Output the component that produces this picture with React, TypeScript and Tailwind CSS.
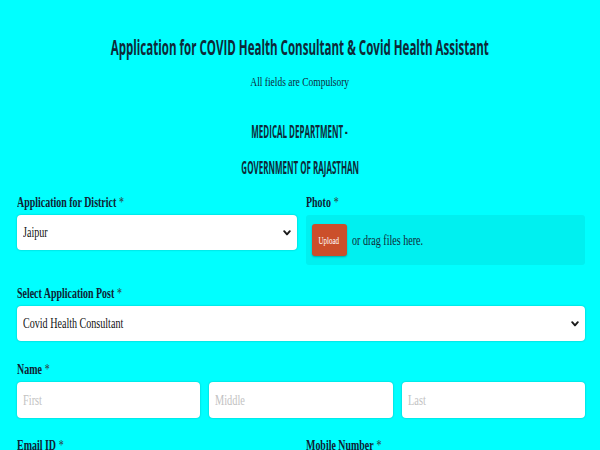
import React from "react";

const serif = "font-['Liberation_Serif',serif]";

function Label({ children, star = true }: { children: React.ReactNode; star?: boolean }) {
  return (
    <div className={`h-[18px] leading-[18px] text-[14px] font-bold text-[#0f2233] ${serif}`}>
      <span className="inline-block origin-left scale-x-[0.71] whitespace-nowrap">
        {children}
        {star && <span className="font-normal text-[#333] ml-[4px]">*</span>}
      </span>
    </div>
  );
}

function Chevron() {
  return (
    <svg width="8" height="6" viewBox="0 0 8 6" className="shrink-0">
      <polyline points="1.2,1.2 4,4.4 6.8,1.2" fill="none" stroke="#1a1a1a" strokeWidth="1.9" strokeLinecap="round" strokeLinejoin="round" />
    </svg>
  );
}

function Select({ value }: { value: string }) {
  return (
    <div className="h-[35px] bg-white rounded-[4px] shadow-[0_0_2px_rgba(0,0,0,0.3)] flex items-center justify-between pl-[6px] pr-[6px]">
      <span className={`inline-block origin-left scale-x-[0.72] whitespace-nowrap text-[14px] text-[#111] ${serif}`}>{value}</span>
      <Chevron />
    </div>
  );
}

function Input({ placeholder }: { placeholder: string }) {
  return (
    <div className="h-[36px] bg-white rounded-[4px] shadow-[0_0_2px_rgba(0,0,0,0.3)] flex items-center pl-[6px]">
      <span className={`inline-block origin-left scale-x-[0.74] whitespace-nowrap text-[14px] text-[#c2c2c2] ${serif}`}>{placeholder}</span>
    </div>
  );
}

export default function App() {
  return (
    <div className="min-h-screen w-full bg-[#00ffff] text-[#0f2233] overflow-hidden">
      <div className="pt-[33px]">
        <div className="flex justify-center h-[28px] leading-[28px] font-['Open_Sans',sans-serif] font-bold text-[21px] text-[#0e2a38]">
          <span className="inline-block shrink-0 scale-x-[0.55] whitespace-nowrap">
            Application for COVID Health Consultant &amp; Covid Health Assistant
          </span>
        </div>
        <div className={`flex justify-center mt-[12px] h-[18px] leading-[18px] text-[13px] text-[#0f2a38] ${serif}`}>
          <span className="inline-block shrink-0 scale-x-[0.73] whitespace-nowrap">All fields are Compulsory</span>
        </div>
        <div className="flex justify-center mt-[31px] h-[20px] leading-[20px] font-['Open_Sans',sans-serif] font-bold text-[17px] text-[#0e2a38]">
          <span className="inline-block shrink-0 scale-x-[0.47] whitespace-nowrap">MEDICAL DEPARTMENT -</span>
        </div>
        <div className="flex justify-center mt-[16px] h-[20px] leading-[20px] font-['Open_Sans',sans-serif] font-bold text-[17px] text-[#0e2a38]">
          <span className="inline-block shrink-0 scale-x-[0.47] whitespace-nowrap">GOVERNMENT OF RAJASTHAN</span>
        </div>
      </div>

      <div className="pl-[17px] pr-[15px] mt-[16px]">
        <div className="grid grid-cols-2 gap-x-[9px]">
          <div>
            <Label>Application for District</Label>
            <div className="mt-[3px]">
              <Select value="Jaipur" />
            </div>
          </div>
          <div>
            <Label>Photo</Label>
            <div className="mt-[3px] h-[50px] bg-[#00f0f0] rounded-[3px] flex items-center pl-[6px] gap-[5px]">
              <div className="w-[35px] h-[32px] bg-[#cb4f2b] rounded-[3px] shadow-[0_1px_2px_rgba(0,0,0,0.3)] flex items-center justify-center">
                <span className={`inline-block scale-x-[0.7] text-[10px] text-white ${serif}`}>Upload</span>
              </div>
              <span className={`inline-block origin-left scale-x-[0.72] whitespace-nowrap text-[14px] text-[#0f2a38] ${serif}`}>
                or drag files here.
              </span>
            </div>
          </div>
        </div>

        <div className="mt-[20px]">
          <Label>Select Application Post</Label>
          <div className="mt-[3px]">
            <Select value="Covid Health Consultant" />
          </div>
        </div>

        <div className="mt-[20px]">
          <Label>Name</Label>
          <div className="mt-[3px] grid grid-cols-3 gap-x-[9px]">
            <Input placeholder="First" />
            <Input placeholder="Middle" />
            <Input placeholder="Last" />
          </div>
        </div>

        <div className="mt-[19px] grid grid-cols-2 gap-x-[9px]">
          <Label>Email ID</Label>
          <Label>Mobile Number</Label>
        </div>
      </div>
    </div>
  );
}
